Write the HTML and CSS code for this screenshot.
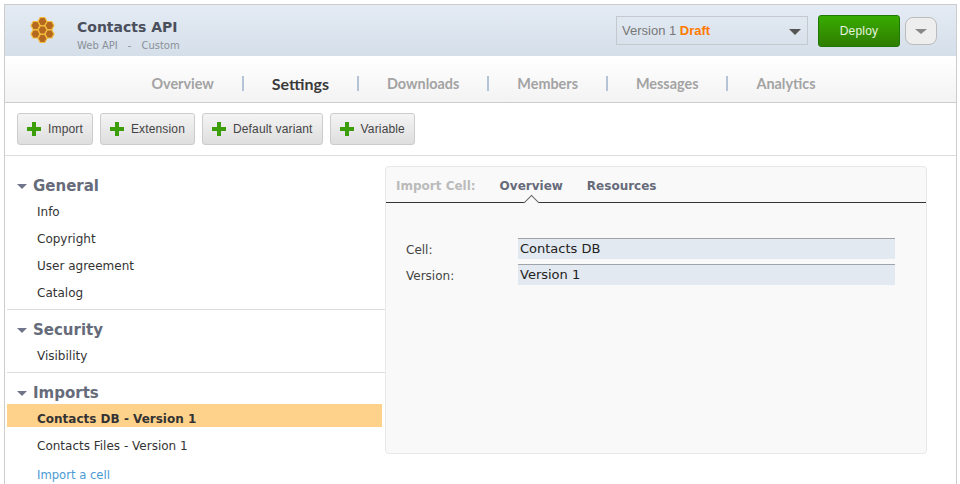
FILE: index.html
```html
<!DOCTYPE html>
<html lang="en">
<head>
    <meta charset="UTF-8">
    <meta name="viewport" content="width=device-width, initial-scale=1.0">
    <title>Contacts API</title>
    <link rel="stylesheet" href="styles.css">
</head>
<body>
<div class="frame">

    <header class="app-head">
        <svg class="logo" width="32" height="32" viewBox="0 0 32 32">
            <defs>
                <polygon id="hex" points="12,11.5 14.2,7.5 18.8,7.5 21,11.5 18.8,15.5 14.2,15.5"/>
            </defs>
            <g fill="#b5681f" stroke="#f2bb3c" stroke-width="1.2">
                <use href="#hex" x="0" y="-4"/>
                <use href="#hex" x="-7" y="0"/>
                <use href="#hex" x="7" y="0"/>
                <use href="#hex" x="0" y="4.5"/>
                <use href="#hex" x="-7" y="8.5"/>
                <use href="#hex" x="7" y="8.5"/>
                <use href="#hex" x="0" y="13"/>
            </g>
        </svg>
        <div class="app-title">
            <h1>Contacts API</h1>
            <p><span>Web API</span><span>-</span><span>Custom</span></p>
        </div>
        <div class="version-select">
            <span>Version 1 <b>Draft</b></span>
            <i class="caret"></i>
        </div>
        <button class="deploy">Deploy</button>
        <button class="more"><i class="caret"></i></button>
    </header>

    <nav class="main-nav">
        <a href="#">Overview</a>
        <span class="sep"></span>
        <a href="#" class="active">Settings</a>
        <span class="sep"></span>
        <a href="#">Downloads</a>
        <span class="sep"></span>
        <a href="#">Members</a>
        <span class="sep"></span>
        <a href="#">Messages</a>
        <span class="sep"></span>
        <a href="#">Analytics</a>
    </nav>

    <div class="toolbar">
        <button class="add-btn"><svg width="14" height="14" viewBox="0 0 14 14"><path d="M5 0h4v5h5v4H9v5H5V9H0V5h5z" fill="#3d9e0c"/></svg>Import</button>
        <button class="add-btn"><svg width="14" height="14" viewBox="0 0 14 14"><path d="M5 0h4v5h5v4H9v5H5V9H0V5h5z" fill="#3d9e0c"/></svg>Extension</button>
        <button class="add-btn"><svg width="14" height="14" viewBox="0 0 14 14"><path d="M5 0h4v5h5v4H9v5H5V9H0V5h5z" fill="#3d9e0c"/></svg>Default variant</button>
        <button class="add-btn"><svg width="14" height="14" viewBox="0 0 14 14"><path d="M5 0h4v5h5v4H9v5H5V9H0V5h5z" fill="#3d9e0c"/></svg>Variable</button>
    </div>

    <div class="content">
        <aside class="side">
            <section class="side-group">
                <h3>General</h3>
                <a href="#">Info</a>
                <a href="#">Copyright</a>
                <a href="#">User agreement</a>
                <a href="#">Catalog</a>
            </section>
            <section class="side-group">
                <h3>Security</h3>
                <a href="#">Visibility</a>
            </section>
            <section class="side-group last">
                <h3>Imports</h3>
                <a href="#" class="selected">Contacts DB - Version 1</a>
                <a href="#">Contacts Files - Version 1</a>
                <a href="#" class="link">Import a cell</a>
            </section>
        </aside>

        <main class="panel">
            <div class="tabs">
                <span class="tabs-label">Import Cell:</span>
                <a href="#" class="current">Overview</a>
                <a href="#">Resources</a>
            </div>
            <div class="form">
                <div class="form-row">
                    <label>Cell:</label>
                    <div class="field">Contacts DB</div>
                </div>
                <div class="form-row">
                    <label>Version:</label>
                    <div class="field">Version 1</div>
                </div>
            </div>
        </main>
    </div>

</div>
</body>
</html>
```

FILE: styles.css
```css
html, body {
    margin: 0;
    height: 484px;
    overflow: hidden;
    background-color: white;
}
body {
    padding: 4px 3px 0 4px;
    box-sizing: border-box;
    font-family: "DejaVu Sans", sans-serif;
    font-size: 12px;
    color: #333;
}
a {
    text-decoration: none;
    color: inherit;
}
button {
    font-family: "Liberation Sans", sans-serif;
    cursor: pointer;
}
.frame {
    border: 1px solid #ccc;
    border-bottom: 0;
    height: 480px;
    box-sizing: border-box;
}

/* Top header */
.app-head {
    display: flex;
    align-items: center;
    height: 51px;
    padding-right: 19px;
    background: linear-gradient(to bottom, #e4ebf4, #d5dfe9);
}
.logo {
    margin: -1px 0 0 21px;
    flex: none;
}
.app-title {
    margin: 11px 0 0 19px;
    flex: 1;
}
.app-title h1 {
    margin: 0;
    font-size: 14px;
    line-height: 17px;
    color: #4a4f5c;
}
.app-title p {
    display: flex;
    gap: 10px;
    margin: 3px 0 0;
    font-size: 10px;
    line-height: 14px;
    color: #8a8f98;
}
.version-select {
    display: flex;
    align-items: center;
    justify-content: space-between;
    box-sizing: border-box;
    width: 192px;
    height: 29px;
    padding: 0 6px 0 5px;
    border: 1px solid #c3c9ce;
    font-family: "Liberation Sans", sans-serif;
    font-size: 13px;
    color: #777;
}
.version-select b {
    color: #ff7a00;
}
.caret {
    display: inline-block;
    width: 0;
    height: 0;
    margin-top: 3px;
    border-left: 6px solid transparent;
    border-right: 6px solid transparent;
    border-top: 6px solid #555;
}
.deploy {
    width: 82px;
    height: 32px;
    margin-left: 10px;
    padding: 0;
    border: 1px solid #1f7a05;
    border-radius: 3px;
    background: linear-gradient(to bottom, #38ab00, #2f7d00);
    color: #e8f4e0;
    font-size: 12px;
    letter-spacing: .2px;
}
.more {
    width: 32px;
    height: 28px;
    margin-left: 5px;
    padding: 0;
    border: 1px solid #bbb;
    border-radius: 8px;
    background-color: #eee;
}
.more .caret {
    border-top: 5px solid #888;
    display: block;
    margin: 2px auto 0;
}

/* Main navigation */
.main-nav {
    display: flex;
    align-items: center;
    justify-content: center;
    gap: 28px;
    height: 47px;
    padding: 8px 0 0 6px;
    box-sizing: border-box;
    border-bottom: 1px solid #ccc;
    background: linear-gradient(to bottom, white, #f3f3f3);
    font-family: "Lato", sans-serif;
    font-size: 14.4px;
    font-weight: 700;
    color: #a3a3a3;
}
.main-nav .active {
    font-size: 16px;
    color: #3a3a3a;
}
.main-nav .sep {
    width: 2px;
    height: 15px;
    background-color: #b4c4d6;
}

/* Add buttons */
.toolbar {
    display: flex;
    gap: 7px;
    height: 53px;
    padding: 10px 12px 0;
    box-sizing: border-box;
    border-bottom: 1px solid #ddd;
}
.add-btn {
    display: flex;
    align-items: center;
    gap: 7px;
    height: 32px;
    padding: 0 9px;
    border: 1px solid #ccc;
    border-radius: 3px;
    background: linear-gradient(to bottom, #f4f4f4, #dedede);
    color: #444;
    font-size: 12px;
    letter-spacing: .15px;
}

.content {
    display: flex;
}

/* Side menu */
.side {
    width: 380px;
    flex: none;
    padding-top: 19px;
}
.side-group {
    margin-left: 2px;
    border-bottom: 1px solid #ddd;
    padding-bottom: 2px;
    margin-bottom: 9px;
}
.side-group.last {
    border-bottom: 0;
}
.side-group h3 {
    position: relative;
    margin: 0 0 2px;
    padding-left: 26px;
    font-size: 15px;
    line-height: 22px;
    color: #666b7a;
}
.side-group h3::before {
    content: "";
    position: absolute;
    left: 10px;
    top: 9px;
    border-left: 5px solid transparent;
    border-right: 5px solid transparent;
    border-top: 5px solid #70758a;
}
.side-group a {
    display: block;
    padding-left: 30px;
    height: 27px;
    line-height: 27px;
    color: #333;
}
.side-group a.selected {
    width: 345px;
    height: 21px;
    margin: -2px 0 6px;
    padding-top: 2px;
    font-weight: bold;
    background-color: #ffd28c;
}
.side-group a.link {
    margin-top: 2px;
    font-size: 11.6px;
    color: #4a9ad4;
}

/* Right panel */
.panel {
    width: 542px;
    height: 288px;
    margin-top: 10px;
    box-sizing: border-box;
    border: 1px solid #e8e8e8;
    border-radius: 4px;
    background-color: #f9f9f9;
}
.tabs {
    display: flex;
    gap: 24px;
    height: 32px;
    padding: 3px 0 0 10px;
    border-bottom: 1px solid #333;
    font-weight: bold;
    line-height: 33px;
    color: #666b7a;
}
.tabs-label {
    color: #bbb;
}
.current {
    position: relative;
}
/* little notch under the active tab */
.current::after {
    content: "";
    position: absolute;
    left: 50%;
    bottom: -6px;
    width: 10px;
    height: 10px;
    margin-left: -5px;
    background-color: #f9f9f9;
    border-left: 1px solid #666;
    border-top: 1px solid #666;
    transform: rotate(45deg);
}
.form {
    padding: 35px 0 0 20px;
}
.form-row {
    display: flex;
    align-items: center;
    margin-bottom: 5px;
}
.form-row label {
    width: 112px;
    margin-top: 2px;
    color: #444;
}
.field {
    box-sizing: border-box;
    width: 377px;
    height: 21px;
    padding-left: 2px;
    border-top: 1px solid #a0a4a8;
    background-color: #e2e9f0;
    font-size: 13px;
    line-height: 20px;
    color: #222;
}
```
